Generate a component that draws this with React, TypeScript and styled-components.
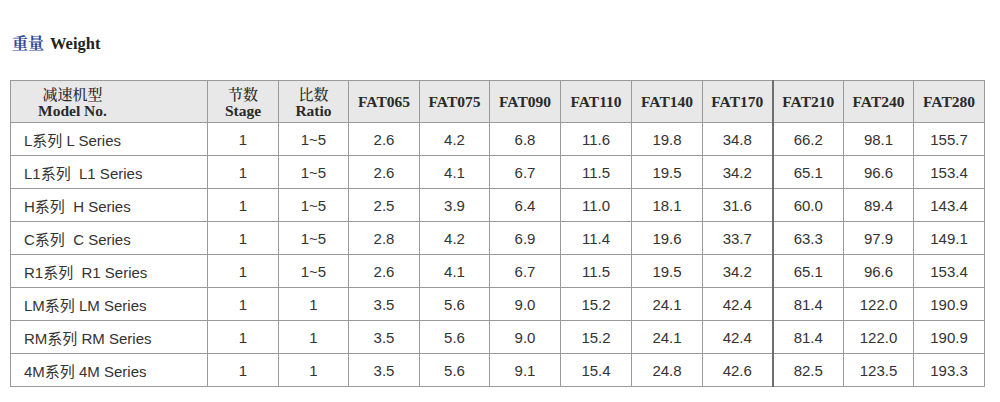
import styled, { createGlobalStyle } from 'styled-components'

const GlobalStyle = createGlobalStyle`
    body{
        margin: 0;
        background: #fff;
    }
`

const Page = styled.div`
    width: 1000px;
    padding: 34px 0 0 10px;
    box-sizing: border-box;
`

const Title = styled.h2`
    margin: 0 0 27px 2px;
    font-family: "Liberation Serif", "Noto Sans CJK SC", serif;
    font-size: 16.5px;
    font-weight: 700;
    color: #222;
    line-height: 18px;
    span{
        font-family: "Noto Serif CJK SC", "Noto Sans CJK SC", serif;
        font-size: 16px;
        color: #34489a;
        margin-right: 6px;
    }
`

const Table = styled.table`
    border-collapse: collapse;
    table-layout: fixed;
    width: 974px;
    color: #333;
`

const HeadCell = styled.th<{ $model?: boolean; $strong?: boolean }>`
    height: 41px;
    padding: 0;
    background: #e8e8e8;
    border: 1px solid #9a9a9a;
    border-right: ${p => p.$strong ? '2px solid #6f6f6f' : '1px solid #9a9a9a'};
    font-family: "Liberation Serif", "Noto Serif CJK SC", "Noto Sans CJK SC", serif;
    font-size: 15.5px;
    font-weight: 700;
    line-height: 17px;
    color: #2a2a2a;
    text-align: ${p => p.$model ? 'left' : 'center'};
    padding-left: ${p => p.$model ? '27px' : '0'};
    div{
        display: inline-block;
        text-align: center;
    }
    small{
        display: block;
        font-size: 15px;
        font-weight: 500;
        font-family: "Noto Serif CJK SC", "Noto Sans CJK SC", serif;
    }
`

const Cell = styled.td<{ $model?: boolean; $strong?: boolean }>`
    height: 32px;
    padding: 0;
    border: 1px solid #9a9a9a;
    border-right: ${p => p.$strong ? '2px solid #6f6f6f' : '1px solid #9a9a9a'};
    font-family: "Liberation Sans", "Noto Sans CJK SC", sans-serif;
    font-size: 15px;
    color: #333;
    text-align: ${p => p.$model ? 'left' : 'center'};
    padding-left: ${p => p.$model ? '13px' : '0'};
    white-space: pre;
`

const sizes = ['FAT065', 'FAT075', 'FAT090', 'FAT110', 'FAT140', 'FAT170', 'FAT210', 'FAT240', 'FAT280']
const widths = [197, 71, 70, 71, 70, 71, 71, 71, 70, 71, 70, 71]

const rows = [
    ['L系列 L Series', '1', '1~5', '2.6', '4.2', '6.8', '11.6', '19.8', '34.8', '66.2', '98.1', '155.7'],
    ['L1系列  L1 Series', '1', '1~5', '2.6', '4.1', '6.7', '11.5', '19.5', '34.2', '65.1', '96.6', '153.4'],
    ['H系列  H Series', '1', '1~5', '2.5', '3.9', '6.4', '11.0', '18.1', '31.6', '60.0', '89.4', '143.4'],
    ['C系列  C Series', '1', '1~5', '2.8', '4.2', '6.9', '11.4', '19.6', '33.7', '63.3', '97.9', '149.1'],
    ['R1系列  R1 Series', '1', '1~5', '2.6', '4.1', '6.7', '11.5', '19.5', '34.2', '65.1', '96.6', '153.4'],
    ['LM系列 LM Series', '1', '1', '3.5', '5.6', '9.0', '15.2', '24.1', '42.4', '81.4', '122.0', '190.9'],
    ['RM系列 RM Series', '1', '1', '3.5', '5.6', '9.0', '15.2', '24.1', '42.4', '81.4', '122.0', '190.9'],
    ['4M系列 4M Series', '1', '1', '3.5', '5.6', '9.1', '15.4', '24.8', '42.6', '82.5', '123.5', '193.3'],
]

// the line after FAT170 is drawn heavier in the original sheet
const STRONG_COL = 8

function App(){
    return (
        <Page>
            <GlobalStyle />
            <Title><span>重量</span>Weight</Title>
            <Table>
                <colgroup>
                    {widths.map((w, i) => <col key={i} style={{ width: w }} />)}
                </colgroup>
                <thead>
                    <tr>
                        <HeadCell $model>
                            <div><small>减速机型</small>Model No.</div>
                        </HeadCell>
                        <HeadCell><small>节数</small>Stage</HeadCell>
                        <HeadCell><small>比数</small>Ratio</HeadCell>
                        {sizes.map((s, i) => (
                            <HeadCell key={s} $strong={i + 3 === STRONG_COL}>{s}</HeadCell>
                        ))}
                    </tr>
                </thead>
                <tbody>
                    {rows.map(r => (
                        <tr key={r[0]}>
                            {r.map((v, i) => (
                                <Cell key={i} $model={i === 0} $strong={i === STRONG_COL}>{v}</Cell>
                            ))}
                        </tr>
                    ))}
                </tbody>
            </Table>
        </Page>
    )
}

export default App
